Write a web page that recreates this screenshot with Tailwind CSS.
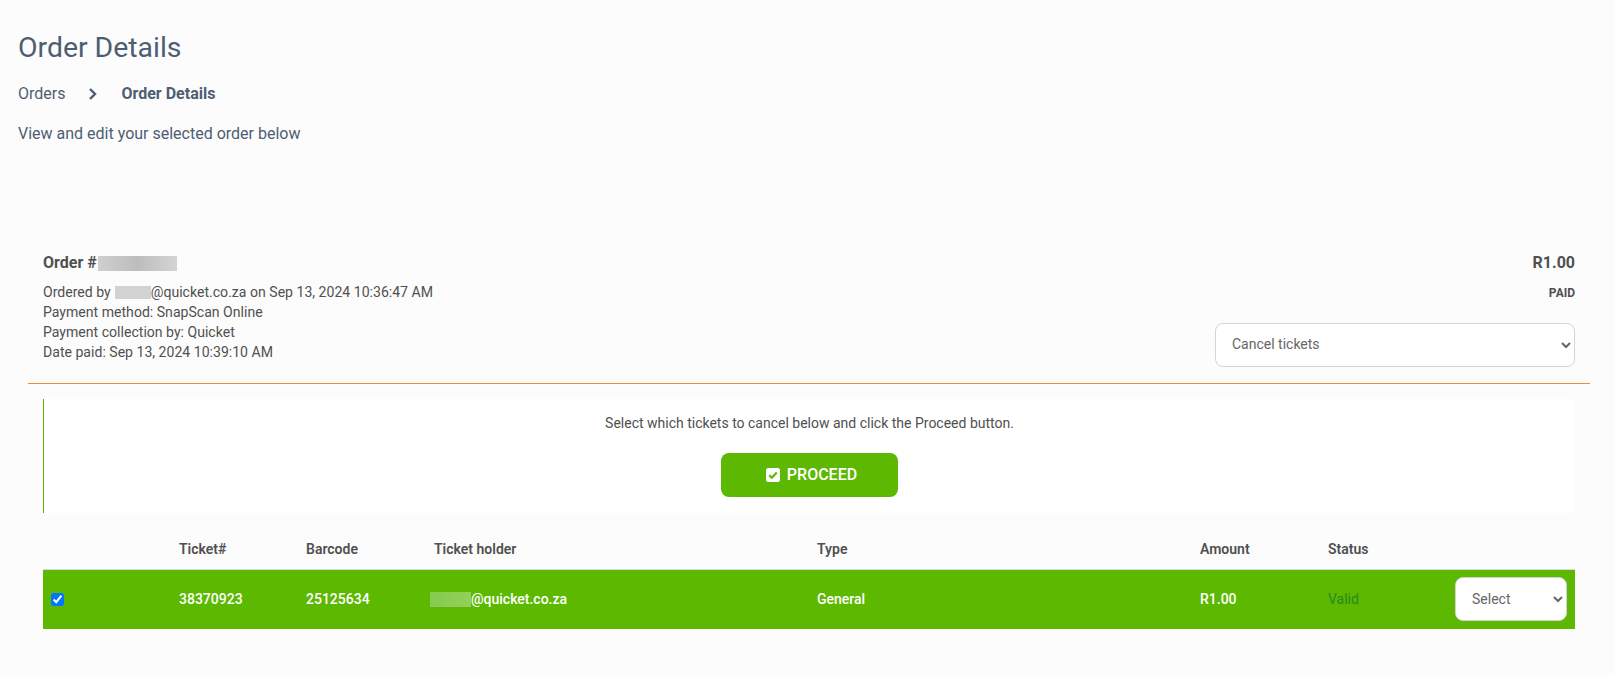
<!DOCTYPE html>
<html lang="en">
<head>
    <meta charset="UTF-8">
    <title>Order Details</title>
    <script src="https://cdn.jsdelivr.net/npm/@tailwindcss/browser@4"></script>
</head>
<body class="bg-[#fcfcfc] min-h-screen font-['Roboto',sans-serif] text-[#505050]">
    <header class="pl-[18px] pt-[28px] text-[#4e5e72]">
        <h1 class="text-[28.4px] leading-[40px] font-normal">Order Details</h1>
        <nav class="flex items-center mt-[15px] h-[21px] text-[16px]">
            <span>Orders</span>
            <svg class="w-[10px] h-[14px] ml-[23px] mr-[23px]" viewBox="0 0 10 14" fill="none" stroke="currentColor" stroke-width="2.4">
                <path d="M2 2l5 5-5 5"/>
            </svg>
            <span class="font-bold">Order Details</span>
        </nav>
        <p class="mt-[19px] text-[16px] leading-[21px]">View and edit your selected order below</p>
    </header>

    <main class="mt-[108px] pl-[28px] pr-[25px]">
        <section class="flex justify-between px-[15px] h-[131px] border-b border-[#ec8a2c] box-content">
            <div>
                <h2 class="flex items-center text-[16px] leading-[22px] font-bold">
                    Order #
                    <span class="inline-block w-[79px] h-[15px] ml-[1px] bg-gradient-to-r from-[#cfcfcf] via-[#bdbdbd] to-[#d4d4d4]"></span>
                </h2>
                <div class="mt-[8px] text-[14.08px] leading-[20px]">
                    <p class="flex items-center">Ordered by <span class="inline-block w-[36px] h-[13px] ml-[4px] bg-[#d2d2d2]"></span>@quicket.co.za on Sep 13, 2024 10:36:47 AM</p>
                    <p>Payment method: SnapScan Online</p>
                    <p>Payment collection by: Quicket</p>
                    <p>Date paid: Sep 13, 2024 10:39:10 AM</p>
                </div>
            </div>
            <div class="flex flex-col items-end">
                <div class="text-[16px] leading-[22px] font-bold">R1.00</div>
                <div class="mt-[11px] text-[12px] leading-[16px] font-bold">PAID</div>
                <select class="mt-[22px] w-[360px] h-[44px] pl-[12px] pb-[2px] text-[14px] text-[#666] bg-white border border-[#d4d4d4] rounded-[8px]">
                    <option>Cancel tickets</option>
                </select>
            </div>
        </section>

        <section class="mt-[15px] mx-[15px] h-[114px] bg-white border-l border-[#5cb800] flex flex-col items-center">
            <p class="mt-[14px] text-[14px] leading-[20px]">Select which tickets to cancel below and click the Proceed button.</p>
            <button class="mt-[20px] w-[177px] h-[44px] pl-[4px] bg-[#5cb800] text-white text-[16px] font-medium rounded-[8px] flex items-center justify-center gap-[7px]">
                <svg class="w-[14px] h-[14px]" viewBox="0 0 14 14">
                    <rect width="14" height="14" rx="2.5" fill="#fff"/>
                    <path d="M3.2 7.2l2.6 2.6 5-5.2" fill="none" stroke="#5cb800" stroke-width="2.2"/>
                </svg>
                PROCEED
            </button>
        </section>

        <table class="mx-[15px] w-[1532px] table-fixed text-[14px] border-collapse">
            <colgroup>
                <col class="w-[128px]"><col class="w-[127px]"><col class="w-[128px]"><col class="w-[383px]"><col class="w-[383px]"><col class="w-[128px]"><col class="w-[127px]"><col class="w-[128px]">
            </colgroup>
            <thead>
                <tr class="h-[56px] text-left">
                    <th></th>
                    <th class="px-2 pt-[18px] font-semibold">Ticket#</th>
                    <th class="px-2 pt-[18px] font-semibold">Barcode</th>
                    <th class="px-2 pt-[18px] font-semibold">Ticket holder</th>
                    <th class="px-2 pt-[18px] font-semibold">Type</th>
                    <th class="px-2 pt-[18px] font-semibold">Amount</th>
                    <th class="px-2 pt-[18px] font-semibold">Status</th>
                    <th></th>
                </tr>
            </thead>
            <tbody>
                <tr class="h-[60px] bg-[#5cb800] text-white font-medium border-t border-[#d8d8d8]">
                    <td class="px-2"><input type="checkbox" checked class="block w-[13px] h-[13px] accent-[#0075ff]"></td>
                    <td class="px-2">38370923</td>
                    <td class="px-2">25125634</td>
                    <td class="px-2">
                        <span class="flex items-center -ml-[4px]"><span class="inline-block w-[41px] h-[15px] bg-gradient-to-r from-[#84cc50] to-[#93d057]"></span>@quicket.co.za</span>
                    </td>
                    <td class="px-2">General</td>
                    <td class="px-2">R1.00</td>
                    <td class="px-2 font-normal text-[#238a1f]">Valid</td>
                    <td class="px-2">
                        <select class="block w-[112px] h-[44px] pl-[12px] text-[14px] font-normal text-[#666] bg-white border border-[#d4d4d4] rounded-[8px]">
                            <option>Select</option>
                        </select>
                    </td>
                </tr>
            </tbody>
        </table>
    </main>
</body>
</html>
